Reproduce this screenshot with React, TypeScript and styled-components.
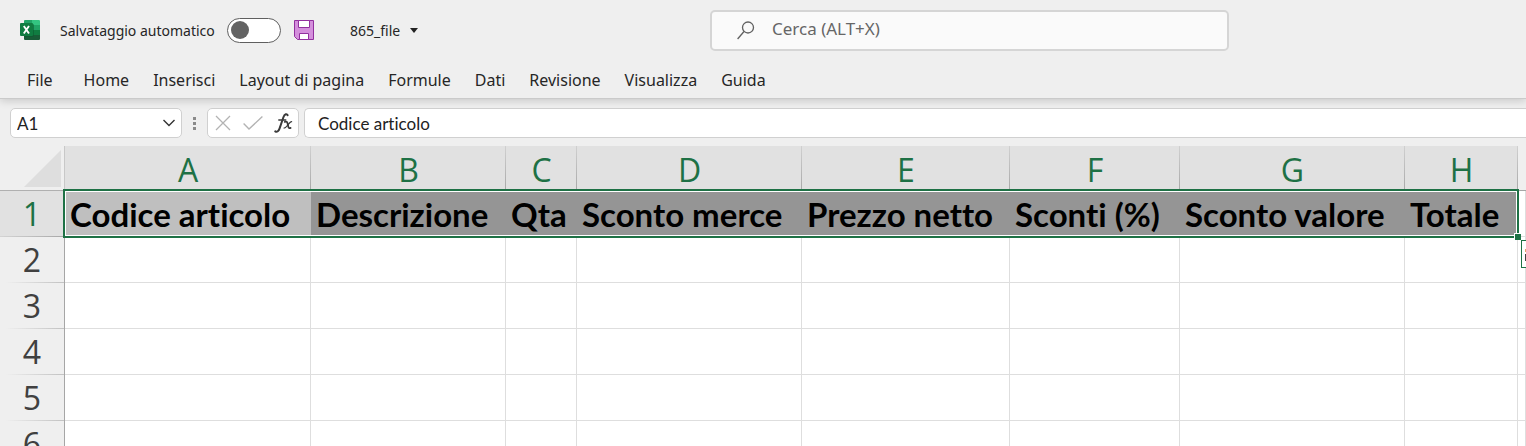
import React from "react";
import styled, { createGlobalStyle, css } from "styled-components";

const UI_FONT = '"Noto Sans", "Open Sans", sans-serif';
const HEAD_FONT = '"Open Sans", "Noto Sans", sans-serif';
const CELL_FONT = 'Lato, "Liberation Sans", sans-serif';
const GREEN = "#1e7145";

const GlobalStyle = createGlobalStyle`
  *, *::before, *::after { box-sizing: border-box; }
  body {
    margin: 0;
    background: #efefef;
    font-family: ${UI_FONT};
    font-variant-ligatures: none;
    color: #262626;
  }
  button, input { font: inherit; font-variant-ligatures: none; color: inherit; margin: 0; }
  button { padding: 0; border: 0; background: none; }
`;

const Workbook = styled.div`
  display: flex;
  flex-direction: column;
  height: 100vh;
  overflow: hidden;
`;

const Ribbon = styled.header`
  position: relative;
  z-index: 1;
  flex: none;
  background: #efefef;
  border-bottom: 1px solid #cacaca;
  box-shadow: 0 2px 8px rgba(0, 0, 0, 0.16);
`;

const TitleBar = styled.div`
  display: flex;
  align-items: center;
  height: 60px;
`;

const QuickAccess = styled.div`
  display: flex;
  align-items: center;
  flex: 0 0 710px;
  height: 60px;
  padding-left: 20px;
  font-size: 14px;
`;

const AppLogo = styled.svg`
  width: 20px;
  height: 20px;
  margin-right: 20px;
`;

const AutoSave = styled.label`
  display: flex;
  align-items: center;
  justify-content: space-between;
  width: 221px;
  white-space: nowrap;
`;

const Switch = styled.input`
  appearance: none;
  width: 54px;
  height: 25px;
  border: 1px solid #5f5f5f;
  border-radius: 13px;
  background: #fff;
  display: flex;
  align-items: center;
  padding: 0 3px;

  &::before {
    content: "";
    width: 18px;
    height: 18px;
    border-radius: 50%;
    background: #636363;
  }
  &:checked { justify-content: flex-end; }
`;

const SaveButton = styled.button`
  display: flex;
  margin: 0 36px 0 13px;
`;

const FileName = styled.button`
  display: flex;
  align-items: center;
  gap: 10px;
`;

const SearchBox = styled.label`
  display: flex;
  align-items: center;
  flex: 0 1 519px;
  height: 41px;
  padding-left: 25px;
  gap: 17px;
  border: 2px solid #d5d5d5;
  border-radius: 5px;
  background: #fafafa;
  color: #616161;
`;

const SearchInput = styled.input`
  flex: 1;
  min-width: 0;
  height: 22px;
  margin-bottom: 4px;
  padding: 0;
  border: 0;
  outline: 0;
  background: none;
  font-size: 17px;
  &::placeholder { color: #666; opacity: 1; }
`;

const Tabs = styled.nav`
  display: flex;
  align-items: center;
  gap: 24px;
  height: 38px;
  padding: 2px 0 0 27px;
`;

const Tab = styled.button<{ $wide?: boolean }>`
  font-size: 16px;
  line-height: 22px;
  white-space: nowrap;
  margin-right: ${(p) => (p.$wide ? 7 : 0)}px;
`;

const FormulaBar = styled.div`
  display: flex;
  flex: none;
  height: 47px;
  padding: 9px 0 8px 10px;
  font-family: ${CELL_FONT};
  font-size: 17px;
  color: #222;
`;

const field = css`
  display: flex;
  align-items: center;
  min-width: 0;
  height: 30px;
  border: 1px solid #d0d0d0;
  border-radius: 5px;
  background: #fff;
`;

const NameBox = styled.div`
  ${field}
  flex: 0 0 172px;
  padding: 0 5px 0 6px;
`;

const PlainInput = styled.input`
  flex: 1;
  min-width: 0;
  height: 22px;
  padding: 0;
  border: 0;
  outline: 0;
  background: none;
`;

const IconButton = styled.button`
  display: flex;
`;

const Grip = styled.svg`
  flex: none;
  width: 3px;
  height: 30px;
  margin: 0 11px;
`;

const FormulaTools = styled.div`
  ${field}
  flex: 0 0 92px;
  justify-content: space-between;
  padding: 0 5px 0 7px;
  margin-right: 5px;
`;

const FormulaField = styled.div`
  ${field}
  flex: 1;
  border-right: 0;
  border-radius: 5px 0 0 5px;
  padding-left: 13px;
`;

const SheetArea = styled.main`
  position: relative;
  flex: 1;
  min-height: 0;
  overflow: hidden;
`;

const Sheet = styled.table`
  width: 100%;
  table-layout: fixed;
  border-collapse: separate;
  border-spacing: 0;
`;

const Col = styled.col<{ $width?: number }>`
  width: ${(p) => (p.$width ? `${p.$width}px` : "auto")};
`;

const headText = css`
  font-family: ${HEAD_FONT};
  font-size: 32px;
  font-weight: 400;
  line-height: 40px;
  text-align: center;
`;

const Corner = styled.td`
  height: 45px;
  padding: 4px 3px 3px 24px;
  border-right: 1px solid #c8c8c8;
  border-bottom: 1px solid #b0b0b0;
  vertical-align: top;
  svg { display: block; }
`;

const ColumnHead = styled.th<{ $selected?: boolean }>`
  ${headText}
  height: 45px;
  padding: 4px 0 0;
  color: ${GREEN};
  border-bottom: 1px solid #a6a6a6;
  background: ${(p) =>
    p.$selected
      ? "linear-gradient(#d0d0d0, #a8a8a8) right / 1px 100% no-repeat #e1e1e1"
      : "#efefef"};
`;

const RowHead = styled.th<{ $selected?: boolean }>`
  ${headText}
  height: 46px;
  padding: 0 0 1px;
  border-right: 1px solid #a6a6a6;
  color: ${(p) => (p.$selected ? GREEN : "#404040")};
  background: ${(p) =>
    p.$selected
      ? "linear-gradient(90deg, #d4d4d4, #a8a8a8) bottom / 100% 1px no-repeat #e1e1e1"
      : "linear-gradient(90deg, #efefef 8%, #c2c2c2) bottom / 100% 1px no-repeat #efefef"};
`;

const Cell = styled.td<{ $fill?: string }>`
  height: 46px;
  padding: 1px 0 0 5px;
  overflow: hidden;
  white-space: nowrap;
  font-family: ${CELL_FONT};
  font-size: 33px;
  font-weight: 700;
  line-height: 44px;
  color: #000;
  border-right: 1px solid ${(p) => p.$fill ?? "#dedede"};
  border-bottom: 1px solid #dedede;
  background: ${(p) => p.$fill ?? "#fff"};
`;

const Selection = styled.div`
  position: absolute;
  top: 43px;
  left: 63px;
  width: 1456px;
  height: 49px;
  border: 2px solid ${GREEN};
  box-shadow: inset 0 0 0 1px #fff;
  pointer-events: none;

  &::after {
    content: "";
    position: absolute;
    right: -4px;
    bottom: -4px;
    width: 7px;
    height: 7px;
    border: 1px solid #fff;
    border-width: 1px 0 0 1px;
    background: ${GREEN};
  }
`;

const QuickAnalysis = styled.button`
  position: absolute;
  top: 94px;
  left: 1521px;
  width: 28px;
  height: 28px;
  padding: 8px 3px;
  border: 1px solid ${GREEN};
  background: #fff;
  svg { display: block; }
`;

const tabs = ["File", "Home", "Inserisci", "Layout di pagina", "Formule", "Dati", "Revisione", "Visualizza", "Guida"];

const columns = [
  { letter: "A", width: 246, title: "Codice articolo" },
  { letter: "B", width: 195, title: "Descrizione" },
  { letter: "C", width: 71, title: "Qta" },
  { letter: "D", width: 225, title: "Sconto merce" },
  { letter: "E", width: 208, title: "Prezzo netto" },
  { letter: "F", width: 170, title: "Sconti (%)" },
  { letter: "G", width: 225, title: "Sconto valore" },
  { letter: "H", width: 113, title: "Totale" },
];

const emptyRows = [2, 3, 4, 5, 6];

export default function App() {
  return (
    <Workbook>
      <GlobalStyle />
      <Ribbon>
        <TitleBar>
          <QuickAccess>
            <AppLogo viewBox="0 0 20 20" aria-label="Excel">
              <path d="M4 1a1 1 0 0 1 1-1h7v5H4z" fill="#21a366" />
              <path d="M12 0h7a1 1 0 0 1 1 1v4h-8z" fill="#33c481" />
              <path d="M4 5h8v5H4z" fill="#107c41" />
              <path d="M12 5h8v5h-8z" fill="#21a366" />
              <path d="M4 10h8v5H4z" fill="#185c37" />
              <path d="M12 10h8v5h-8z" fill="#107c41" />
              <path d="M4 15h16v4a1 1 0 0 1-1 1H5a1 1 0 0 1-1-1z" fill="#185c37" />
              <path d="M4 4h9a1 1 0 0 1 1 1v10a2 2 0 0 1-2 2H4z" fill="#0b5a2f" opacity=".55" />
              <rect y="3" width="13" height="13" rx="1" fill="#107c41" />
              <path d="M3.8 6l5.200 7.500M9 6l-5.200 7.500" fill="none" stroke="#fff" strokeWidth="1.9" />
            </AppLogo>
            <AutoSave>
              Salvataggio automatico
              <Switch type="checkbox" role="switch" />
            </AutoSave>
            <SaveButton aria-label="Salva">
              <svg width="20" height="20" viewBox="0 0 20 20">
                <path d="M.5.5h19v19h-16l-3-3z" fill="#d48fdc" stroke="#92309f" />
                <path d="M4.500.5h11v7h-11z" fill="#fff" stroke="#92309f" />
                <path d="M5.500 19.500v-6h9v6z" fill="#fff" stroke="#92309f" />
              </svg>
            </SaveButton>
            <FileName>
              865_file
              <svg width="8" height="5" viewBox="0 0 8 5"><path d="M0 0h8L4 5z" fill="#222" /></svg>
            </FileName>
          </QuickAccess>
          <SearchBox>
            <svg width="18" height="19" viewBox="0 0 18 19" fill="none" stroke="#616161" strokeWidth="1.3" aria-hidden="true">
              <circle cx="11" cy="6.500" r="5.500" />
              <path d="M7 10.500L.6 18" />
            </svg>
            <SearchInput type="text" aria-label="Cerca" placeholder="Cerca (ALT+X)" />
          </SearchBox>
        </TitleBar>
        <Tabs>
          {tabs.map((t, i) => (
            <Tab key={t} $wide={i === 0}>{t}</Tab>
          ))}
        </Tabs>
      </Ribbon>

      <FormulaBar>
        <NameBox>
          <PlainInput aria-label="Casella nome" defaultValue="A1" />
          <IconButton aria-label="Apri elenco nomi">
            <svg width="14" height="8" viewBox="0 0 14 8" fill="none" stroke="#333" strokeWidth="1.4"><path d="M1.500 1L7 6.500 12.500 1" /></svg>
          </IconButton>
        </NameBox>
        <Grip viewBox="0 0 3 30" fill="#8a8a8a" aria-hidden="true">
          <path d="M0 9h3v3H0zM0 14h3v3H0zM0 19h3v3H0z" />
        </Grip>
        <FormulaTools>
          <IconButton aria-label="Annulla">
            <svg width="16" height="16" viewBox="0 0 16 16" fill="none" stroke="#b3b3b3" strokeWidth="1.3"><path d="M1 1l14 14M15 1L1 15" /></svg>
          </IconButton>
          <IconButton aria-label="Invio">
            <svg width="20" height="14" viewBox="0 0 20 14" fill="none" stroke="#b3b3b3" strokeWidth="1.4"><path d="M.6 7.500L6 13 19.400.6" /></svg>
          </IconButton>
          <IconButton aria-label="Inserisci funzione">
            <svg width="19" height="20" viewBox="0 0 19 20" fill="none" stroke="#3a3a3a" strokeLinecap="round">
              <path d="M13.600 2.200C13 .6 10.600.6 9.400 4.200L5.600 15.400C4.800 17.800 3 19.600 1.300 18.400" strokeWidth="2" />
              <path d="M4.800 7h7" strokeWidth="1.400" />
              <path d="M10.800 8.800c2-.8 2.500.4 2.900 2.200l.6 2.600c.3 1.500 1 2 2.300 1.300" strokeWidth="1.800" />
              <path d="M17.600 8.600c-2-.3-5.200 6.700-7.600 6.400" strokeWidth="1.200" />
            </svg>
          </IconButton>
        </FormulaTools>
        <FormulaField>
          <PlainInput aria-label="Barra della formula" defaultValue="Codice articolo" />
        </FormulaField>
      </FormulaBar>

      <SheetArea>
        <Sheet>
          <colgroup>
            <Col $width={65} />
            {columns.map((c) => <Col key={c.letter} $width={c.width} />)}
            <Col />
          </colgroup>
          <thead>
            <tr>
              <Corner>
                <svg width="37" height="37" viewBox="0 0 37 37" aria-hidden="true"><path d="M37 0v37H0z" fill="#dedede" /></svg>
              </Corner>
              {columns.map((c) => <ColumnHead key={c.letter} scope="col" $selected>{c.letter}</ColumnHead>)}
              <ColumnHead />
            </tr>
          </thead>
          <tbody>
            <tr>
              <RowHead scope="row" $selected>1</RowHead>
              {columns.map((c, i) => (
                <Cell key={c.letter} $fill={i === 0 ? "#bfbfbf" : "#959595"}>{c.title}</Cell>
              ))}
              <Cell />
            </tr>
            {emptyRows.map((n) => (
              <tr key={n}>
                <RowHead scope="row">{n}</RowHead>
                {columns.map((c) => <Cell key={c.letter} />)}
                <Cell />
              </tr>
            ))}
          </tbody>
        </Sheet>
        <Selection />
        <QuickAnalysis aria-label="Analisi rapida">
          <svg width="20" height="12" viewBox="0 0 20 12"><path d="M0 0h6v3H0z" fill="#e8a06a" /><path d="M0 5h6v7H0z" fill="#444" /></svg>
        </QuickAnalysis>
      </SheetArea>
    </Workbook>
  );
}
